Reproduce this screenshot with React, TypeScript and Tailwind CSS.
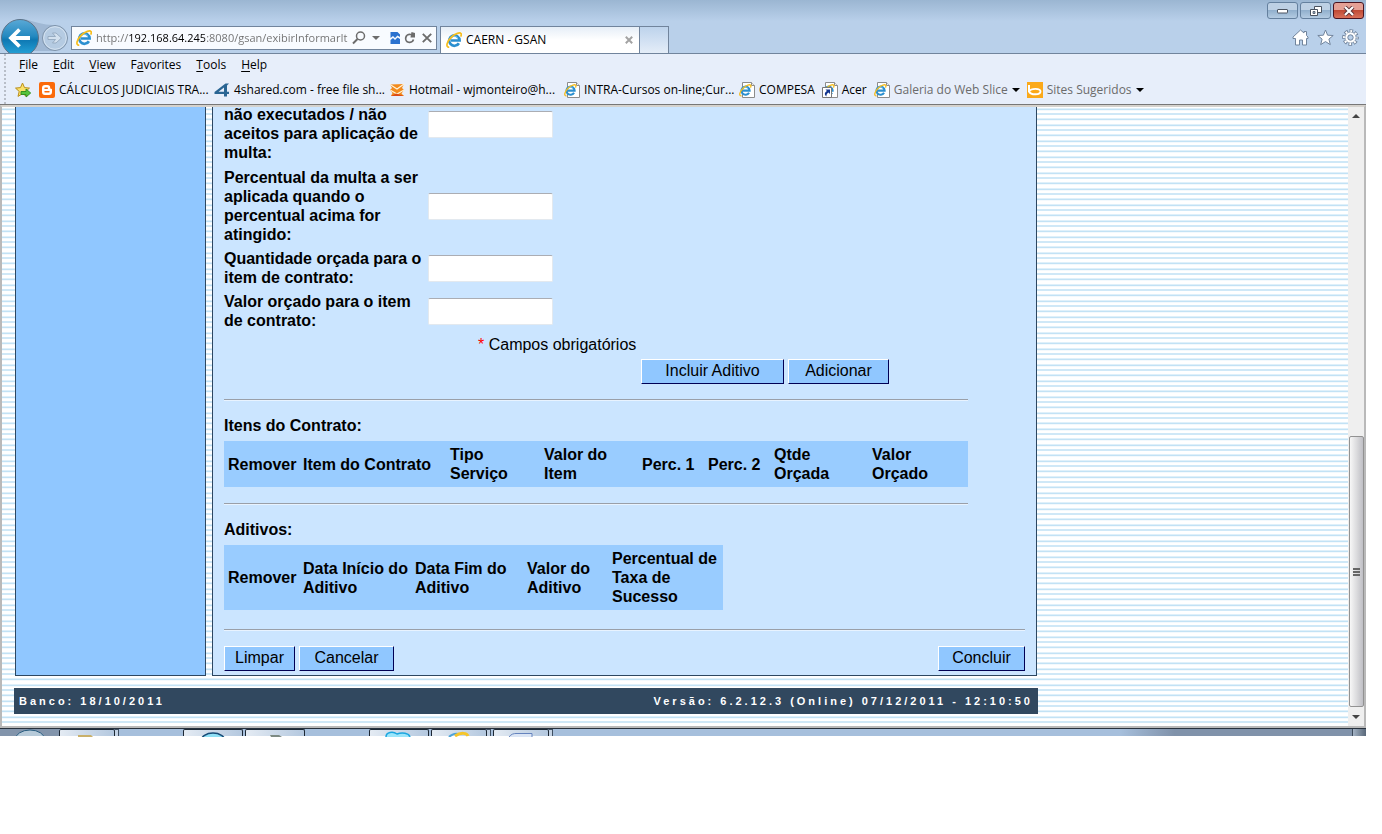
import type { ReactNode } from 'react'

const campos = [
  { id: 'percentualItens', linhas: ['não executados / não', 'aceitos para aplicação de', 'multa:'], topo: true },
  {
    id: 'percentualMulta',
    linhas: ['Percentual da multa a ser', 'aplicada quando o', 'percentual acima for', 'atingido:'],
  },
  { id: 'quantidadeOrcada', linhas: ['Quantidade orçada para o', 'item de contrato:'] },
  { id: 'valorOrcado', linhas: ['Valor orçado para o item', 'de contrato:'] },
]

const colunasItens = [
  { linhas: ['Remover'], largura: 'w-[75px]' },
  { linhas: ['Item do Contrato'], largura: 'w-[147px]' },
  { linhas: ['Tipo', 'Serviço'], largura: 'w-[94px]' },
  { linhas: ['Valor do', 'Item'], largura: 'w-[98px]' },
  { linhas: ['Perc. 1'], largura: 'w-[66px]' },
  { linhas: ['Perc. 2'], largura: 'w-[66px]' },
  { linhas: ['Qtde', 'Orçada'], largura: 'w-[98px]' },
  { linhas: ['Valor', 'Orçado'], largura: 'w-[100px]' },
]

const colunasAditivos = [
  { linhas: ['Remover'], largura: 'w-[75px]' },
  { linhas: ['Data Início do', 'Aditivo'], largura: 'w-[112px]' },
  { linhas: ['Data Fim do', 'Aditivo'], largura: 'w-[112px]' },
  { linhas: ['Valor do', 'Aditivo'], largura: 'w-[85px]' },
  { linhas: ['Percentual de', 'Taxa de', 'Sucesso'], largura: 'w-[115px]' },
]

const menus = [
  ['', 'F', 'ile'],
  ['', 'E', 'dit'],
  ['', 'V', 'iew'],
  ['F', 'a', 'vorites'],
  ['', 'T', 'ools'],
  ['', 'H', 'elp'],
]

function IeMark() {
  return (
    <>
      <path d="M12.9 11.2a5.2 5.2 0 1 1 .7-2.7H5" fill="none" stroke="#2a8fd0" strokeWidth="2.7" />
      <path d="M4.2 6.8a4.6 4.6 0 0 1 7.4-1.2" fill="none" stroke="#7fcdf2" strokeWidth="1" />
      <path d="M3.200 15.200C-.6 15.600.6 9.500 5.500 5 9.500 1.300 14 .1 15 1.600c.5.700.3 1.800-.3 3" fill="none" stroke="#f6bd1d" strokeWidth="1.700" />
    </>
  )
}

function IeIcon() {
  return (
    <svg viewBox="0 0 16 16" className="size-4 shrink-0">
      <IeMark />
    </svg>
  )
}

function PageIcon({ shortcut }: { shortcut?: boolean }) {
  return (
    <svg viewBox="0 0 16 16" className="size-4 shrink-0">
      <path d="M3.500.5h9l3 3v12h-12z" fill="#fff" stroke="#8c8c8c" />
      <path d="M12.500.5v3h3" fill="#eee" stroke="#8c8c8c" />
      <g transform="translate(0 2) scale(.78)">
        <IeMark />
      </g>
      {shortcut && (
        <>
          <path d="M.5 5.500h9v10h-9z" fill="#fff" stroke="#777" />
          <path d="M3.500 7.500H8v4.500L6.500 10.500C5 11.500 4.200 12.600 4.500 14.500 2 12.500 2.500 10.300 5 9z" fill="#12358f" />
        </>
      )}
    </svg>
  )
}

function AddFavoriteIcon() {
  return (
    <svg viewBox="0 0 16 16" className="size-4 shrink-0">
      <path d="M7.500 1l2 4.600 5 .5-3.800 3.300 1.200 5-4.400-2.700L3 14.400l1.200-5L.5 6.100l5-.5z" fill="#fbe16a" stroke="#b98f1b" />
      <path d="M6 9.500h5V7l4.700 4-4.700 4v-2.500H6z" fill="#56c43c" stroke="#2c8a1d" strokeWidth=".9" />
    </svg>
  )
}

function BloggerIcon() {
  return (
    <svg viewBox="0 0 16 16" className="size-4 shrink-0">
      <rect width="16" height="16" rx="2" fill="#fb6a0a" />
      <path d="M6 3h2.500A2.700 2.700 0 0 1 11.200 5.700c0 .8.3 1 1 1 .6 0 .8.300.8.800V10a3 3 0 0 1-3 3H6a3 3 0 0 1-3-3V6a3 3 0 0 1 3-3z" fill="#fff" />
      <path d="M6 6.200h2.300M6 9.800h4" stroke="#fb6a0a" strokeWidth="1.400" strokeLinecap="round" />
    </svg>
  )
}

function FourSharedIcon() {
  return (
    <svg viewBox="0 0 16 16" className="size-4 shrink-0">
      <path d="M15 1.500h-3.500L.5 10v2H10v2.500h3V12h2v-2.200h-2V3.500zM10 5.500v4.300H4.500z" fill="#2a6593" fillRule="evenodd" />
    </svg>
  )
}

function HotmailIcon() {
  return (
    <svg viewBox="0 0 16 16" className="size-4 shrink-0">
      <path d="M1 2.500l14-.5-2 4 2 2-2.500 3.500L15 14H2l1.500-3L1 8l2-2z" fill="#f28a1c" />
      <path d="M1 2.500L8 7l7-5" fill="none" stroke="#fff3d8" strokeWidth="1.200" />
      <path d="M1.500 8.300L8 12l7-4" fill="none" stroke="#fff3d8" strokeWidth="1.200" />
      <path d="M2 14l5-2.500 8 2.500z" fill="#db4b16" />
    </svg>
  )
}

function BingIcon() {
  return (
    <svg viewBox="0 0 16 16" className="size-4 shrink-0">
      <path d="M0 0h16v16H0z" fill="#fba919" />
      <path d="M2 3v7" stroke="#fff" strokeWidth="2" />
      <path d="M2 9.500C4 6 13.500 6 13.500 9.500S4 13.500 2 9.500z" fill="none" stroke="#fff" strokeWidth="1.900" />
    </svg>
  )
}

function Favorite({ icon, label, wide, muted, menu }: { icon: ReactNode; label: string; wide?: boolean; muted?: boolean; menu?: boolean }) {
  return (
    <a href="#" className={`flex items-center gap-1 whitespace-nowrap ${wide ? 'w-[168px]' : ''} ${muted ? 'text-[#6b6b6b]' : 'text-black'}`}>
      {icon}
      <span>{label}</span>
      {menu && (
        <svg viewBox="0 0 8 4" className="h-1 w-2">
          <path d="M0 0h8L4 4z" fill="#000" />
        </svg>
      )}
    </a>
  )
}

function WindowButton({ label, close, children }: { label: string; close?: boolean; children: ReactNode }) {
  return (
    <button
      type="button"
      aria-label={label}
      className={`flex h-[17px] w-[31px] items-center justify-center rounded-[3px] border ${
        close
          ? 'border-[#4a1420] bg-linear-to-b from-[#e5a095] from-45% via-[#c04a35] via-50% to-[#d9705a]'
          : 'border-[#64809e] bg-linear-to-b from-[#bdd0e4] from-45% via-[#92b0cd] via-50% to-[#b3cbe2]'
      }`}
    >
      {children}
    </button>
  )
}

function Botao({ children, className }: { children: ReactNode; className: string }) {
  return (
    <button
      type="button"
      className={`h-[25px] border border-t-white border-r-[#000055] border-b-[#000055] border-l-white bg-[#90c7ff] pb-0.5 text-base leading-[19px] ${className}`}
    >
      {children}
    </button>
  )
}

function Tabela({ colunas, className }: { colunas: { linhas: string[]; largura: string }[]; className: string }) {
  return (
    <table className={`table-fixed bg-[#99ccff] ${className}`}>
      <thead>
        <tr>
          {colunas.map((coluna, i) => (
            <th key={i} scope="col" className={`py-1 pl-1 text-left align-middle font-bold whitespace-nowrap ${coluna.largura}`}>
              {coluna.linhas.map((linha) => (
                <span key={linha} className="block">
                  {linha}
                </span>
              ))}
            </th>
          ))}
        </tr>
      </thead>
    </table>
  )
}

function Divisor() {
  return <hr className="h-0.5 border-t border-b border-t-[#9a9fa8] border-b-[#e8f3ff]" />
}

function BrowserHeader() {
  return (
    <header className="flex h-[54px] justify-between border-b border-[#71849c] bg-linear-to-b from-[#9bb6d2] to-[#b9d0ea] to-40%">
      <div className="flex items-end">
        <svg viewBox="0 0 71 36" className="h-9 w-[71px]" aria-hidden="true">
          <defs>
            <linearGradient id="back" x1="0" y1="0" x2="0" y2="1">
              <stop offset="0" stopColor="#5aa9d6" />
              <stop offset=".45" stopColor="#2489c0" />
              <stop offset=".55" stopColor="#0e78b3" />
              <stop offset="1" stopColor="#29a8dc" />
            </linearGradient>
          </defs>
          <path d="M20 2c12 0 16 6 36 6v26H20z" fill="#8fa9c4" opacity=".6" />
          <circle cx="20" cy="21" r="18.500" fill="url(#back)" stroke="#5d7287" />
          <path d="M30 21H12M19.500 12.500L11 21l8.500 8.500" fill="none" stroke="#fff" strokeWidth="3.800" />
          <circle cx="55" cy="21" r="12.500" fill="#b5cbe2" stroke="#7d92a9" />
          <circle cx="55" cy="21" r="11.300" fill="none" stroke="#d5e3f1" />
          <path d="M48 19.500h7.500l-3-3.500h3.500l5.500 5-5.500 5h-3.500l3-3.500H48z" fill="#d3e1ef" stroke="#93a8be" strokeWidth=".9" />
        </svg>
        <div className="mb-[3px] flex h-6 w-[366px] items-center border border-[#71849c] bg-[#f8fbff] px-1">
          <IeIcon />
          <input
            type="text"
            aria-label="Address"
            defaultValue="http://192.168.64.245:8080/gsan/exibirInformarIt"
            className="ml-1 min-w-0 flex-1 bg-[linear-gradient(to_right,#707070_32px,#000_32px,#000_109px,#707070_109px)] bg-clip-text text-[11px] text-transparent outline-none"
          />
          <div className="flex items-center gap-1">
            <button type="button" aria-label="Search">
              <svg viewBox="0 0 14 14" className="size-3.5">
                <circle cx="8.500" cy="5" r="4" fill="none" stroke="#6c6c6c" strokeWidth="1.500" />
                <path d="M5.500 8L1 12.500" stroke="#6c6c6c" strokeWidth="2" />
              </svg>
            </button>
            <button type="button" aria-label="Show addresses" className="mr-1 flex w-3 justify-center">
              <svg viewBox="0 0 8 4" className="h-1 w-2">
                <path d="M0 0h8L4 4z" fill="#6c6c6c" />
              </svg>
            </button>
            <button type="button" aria-label="Compatibility view">
              <svg viewBox="0 0 10 12" className="h-3 w-2.5">
                <path d="M.5 0h7L10 2.500V5L7.500 3.500 5 6 3 4 .5 6z" fill="#2b72cf" />
                <path d="M.5 8L3 6l2 2 2.500-2.500L10 7v5H.5z" fill="#2b72cf" />
              </svg>
            </button>
            <button type="button" aria-label="Refresh">
              <svg viewBox="0 0 12 12" className="size-3">
                <path d="M9.500 7.500A4 4 0 1 1 6.500 2.500h2" fill="none" stroke="#6c6c6c" strokeWidth="1.700" />
                <path d="M7.500 0L11 1v4.500H6.500z" fill="#6c6c6c" />
              </svg>
            </button>
            <button type="button" aria-label="Stop" className="ml-0.5">
              <svg viewBox="0 0 10 10" className="size-2.5">
                <path d="M.8.8l8.400 8.400M9.200.8L.8 9.200" stroke="#6c6c6c" strokeWidth="1.900" />
              </svg>
            </button>
          </div>
        </div>
        <div className="ml-[3px] flex h-[27px] items-center border border-b-0 border-[#71849c] bg-linear-to-b from-[#e6eef7] to-white to-50%">
          <div className="flex w-[198px] items-center gap-1 pr-1.5 pl-[5px]">
            <IeIcon />
            <span className="flex-1">CAERN - GSAN</span>
            <button type="button" aria-label="Close tab">
              <svg viewBox="0 0 8 8" className="size-2">
                <path d="M.8.8l6.400 6.400M7.200.8L.8 7.200" stroke="#a3a3a3" strokeWidth="2" />
              </svg>
            </button>
          </div>
          <button type="button" aria-label="New tab" className="h-full w-[29px] border-l border-[#71849c] bg-linear-to-b from-[#bdd3ec] to-[#e4edf8]" />
        </div>
      </div>
      <div className="flex flex-col items-end gap-2.5 pt-0.5 pr-0.5">
        <div className="flex gap-0.5">
          <WindowButton label="Minimize">
            <svg viewBox="0 0 12 6" className="h-1.5 w-3">
              <rect x=".5" y="1.500" width="10" height="3.500" rx=".5" fill="#fff" stroke="#4a5360" />
            </svg>
          </WindowButton>
          <WindowButton label="Restore">
            <svg viewBox="0 0 12 12" className="size-3">
              <path d="M4.500 1.500h7v6h-7z" fill="#fff" stroke="#4a5360" />
              <path d="M.5 4.500h7v6h-7z" fill="#fff" stroke="#4a5360" />
              <path d="M3 6.500h2v2H3z" fill="#9db8d3" stroke="#4a5360" strokeWidth=".8" />
            </svg>
          </WindowButton>
          <WindowButton label="Close" close>
            <svg viewBox="0 0 12 10" className="h-2.5 w-3">
              <path d="M2 1l8 8M10 1L2 9" stroke="#5b3136" strokeWidth="4" />
              <path d="M2 1l8 8M10 1L2 9" stroke="#fff" strokeWidth="2.200" />
            </svg>
          </WindowButton>
        </div>
        <div className="flex gap-2 pr-[5px]">
          <button type="button" aria-label="Home">
            <svg viewBox="0 0 17 17" className="size-[17px]">
              <path d="M8.500 1L12 4V2.500h2.500v4L16 8v1.500h-1.500V16h-4v-5h-3v5h-4V9.500H1V8z" fill="#fff" stroke="#71849c" />
            </svg>
          </button>
          <button type="button" aria-label="Favorites">
            <svg viewBox="0 0 17 17" className="size-[17px]">
              <path d="M8.500 1l2.100 5.200 5.600.3-4.300 3.600 1.400 5.500-4.800-3-4.800 3 1.400-5.500L.8 6.500l5.600-.3z" fill="#fff" stroke="#71849c" />
            </svg>
          </button>
          <button type="button" aria-label="Tools">
            <svg viewBox="0 0 17 17" className="size-[17px]">
              <circle cx="8.500" cy="8.500" r="6.400" fill="none" stroke="#71849c" strokeWidth="3.800" strokeDasharray="3.400 1.626" strokeDashoffset="1.700" />
              <circle cx="8.500" cy="8.500" r="5.600" fill="#fff" stroke="#71849c" strokeWidth=".8" />
              <circle cx="8.500" cy="8.500" r="6.400" fill="none" stroke="#fff" strokeWidth="2.200" strokeDasharray="1.800 3.226" strokeDashoffset=".9" />
              <circle cx="8.500" cy="8.500" r="2.700" fill="#b9d0ea" stroke="#71849c" />
            </svg>
          </button>
        </div>
      </div>
    </header>
  )
}

function Toolbars() {
  return (
    <div className="border-b border-[#777] bg-[#e7eefa] pl-1">
      <div className="border-l-2 border-dotted border-[#b8bec8]">
        <nav className="flex h-[22px] items-center gap-[15px] pl-[13px]">
          {menus.map(([before, key, after]) => (
            <button type="button" key={key + after}>
              {before}
              <span className="underline underline-offset-2">{key}</span>
              {after}
            </button>
          ))}
        </nav>
        <div className="flex h-7 items-center gap-[7px] pl-[9px]">
          <button type="button" aria-label="Add to favorites bar" className="mr-px">
            <AddFavoriteIcon />
          </button>
          <Favorite wide icon={<BloggerIcon />} label="CÁLCULOS JUDICIAIS TRA..." />
          <Favorite wide icon={<FourSharedIcon />} label="4shared.com - free file sh..." />
          <Favorite wide icon={<HotmailIcon />} label="Hotmail - wjmonteiro@h..." />
          <Favorite wide icon={<PageIcon />} label="INTRA-Cursos on-line;Cur..." />
          <Favorite icon={<PageIcon />} label="COMPESA" />
          <Favorite icon={<PageIcon shortcut />} label="Acer" />
          <Favorite muted menu icon={<PageIcon />} label="Galeria do Web Slice" />
          <Favorite muted menu icon={<BingIcon />} label="Sites Sugeridos" />
        </div>
      </div>
    </div>
  )
}

function Formulario() {
  return (
    <main className="flex-1 border border-t-0 border-[#2d4761] bg-[#cbe5ff] px-[11px] pb-1">
      <form className="-mt-0.5 flex flex-col gap-[5px]">
        {campos.map((campo) => (
          <div key={campo.id} className={`flex ${campo.topo ? 'items-start pb-px' : 'items-center'}`}>
            <label htmlFor={campo.id} className="w-[204px] font-bold whitespace-nowrap">
              {campo.linhas.map((linha) => (
                <span key={linha} className="block">
                  {linha}
                </span>
              ))}
            </label>
            <input
              id={campo.id}
              type="text"
              className={`h-[27px] w-[125px] rounded-xs border border-[#e3e9ef] border-t-[#abadb3] bg-white px-1 ${campo.topo ? 'mt-1.5' : ''}`}
            />
          </div>
        ))}
        <p className="pl-[254px]">
          <span className="text-[#ff0000]">*</span> Campos obrigatórios
        </p>
      </form>
      <div className="mt-[5px] flex gap-1 pl-[417px]">
        <Botao className="w-[143px]">Incluir Aditivo</Botao>
        <Botao className="w-[101px]">Adicionar</Botao>
      </div>
      <section className="mt-[15px] max-w-[744px]">
        <Divisor />
        <h2 className="mt-[15px] mb-1.5 font-bold">Itens do Contrato:</h2>
        <Tabela colunas={colunasItens} className="w-full" />
      </section>
      <section className="mt-4 max-w-[744px]">
        <Divisor />
        <h2 className="mt-[15px] mb-1.5 font-bold">Aditivos:</h2>
        <Tabela colunas={colunasAditivos} className="w-[499px]" />
      </section>
      <div className="mt-[19px]">
        <Divisor />
        <div className="mt-[15px] flex gap-1">
          <Botao className="w-[71px]">Limpar</Botao>
          <Botao className="w-[95px]">Cancelar</Botao>
          <Botao className="ml-auto w-[87px]">Concluir</Botao>
        </div>
      </div>
    </main>
  )
}

function ScrollBar() {
  return (
    <div className="flex w-4 flex-col items-center bg-[#efefef] text-[#333]">
      <button type="button" aria-label="Scroll up" className="flex h-[17px] items-center">
        <svg viewBox="0 0 8 4" className="h-1 w-2">
          <path d="M0 4h8L4 0z" fill="#444" />
        </svg>
      </button>
      <div className="min-h-0 flex-[314]" />
      <div className="flex min-h-0 w-[15px] flex-[270] flex-col items-center justify-center gap-px rounded-xs border border-[#929292] bg-linear-to-r from-[#f7f7f7] via-[#dcdcde] to-[#bfbfc5]">
        <span className="h-0.5 w-[7px] bg-[#666]" />
        <span className="h-0.5 w-[7px] bg-[#666]" />
        <span className="h-0.5 w-[7px] bg-[#666]" />
      </div>
      <button type="button" aria-label="Scroll down" className="flex h-[19px] items-center">
        <svg viewBox="0 0 8 4" className="h-1 w-2">
          <path d="M0 0h8L4 4z" fill="#444" />
        </svg>
      </button>
    </div>
  )
}

function TaskButton({ label, stacked, className, children }: { label: string; stacked?: boolean; className: string; children: ReactNode }) {
  return (
    <div className={`flex ${className}`}>
      <button
        type="button"
        aria-label={label}
        className="flex flex-1 justify-center rounded-t-xs border-x border-t border-[#1d2834] bg-linear-to-r from-[#e4ebf3] to-[#b4c8df]"
      >
        <svg viewBox="0 0 32 7" className="h-[7px] w-8">
          {children}
        </svg>
      </button>
      {stacked && <span className="w-1 border-t border-r border-[#3f4f61] bg-[#c3d2e4]" />}
    </div>
  )
}

function TaskBar() {
  return (
    <footer className="flex h-2 justify-between border-t border-[#27313d] bg-linear-to-r from-[#a6bfdc] from-82% to-[#8092aa] to-86%">
      <div className="flex">
        <button type="button" aria-label="Start" className="flex w-[59px] justify-center bg-[#8294ab]">
          <svg viewBox="0 0 32 7" className="h-[7px] w-8">
            <ellipse cx="16" cy="11" rx="15" ry="10" fill="#b6cad9" stroke="#285d80" />
          </svg>
        </button>
        <TaskButton label="Explorer" stacked className="w-[60px]">
          <path d="M7 5h13l2 2H7z" fill="#c9b06a" />
        </TaskButton>
        <TaskButton label="Media" className="ml-16 w-[60px]">
          <ellipse cx="16" cy="11" rx="12" ry="8" fill="#8fe0f5" stroke="#164a77" strokeWidth="1.500" />
        </TaskButton>
        <TaskButton label="Application" className="ml-0.5 w-[60px]">
          <path d="M11 5h9l3 2H12z" fill="#7d8a83" />
        </TaskButton>
        <TaskButton label="Messenger" className="ml-16 w-[60px]">
          <path d="M3 7c0-5 7-6 11-3 5-2 12-1 13 3" fill="#9be6fb" stroke="#1ba6e0" strokeWidth="1.500" />
        </TaskButton>
        <TaskButton label="Internet Explorer" stacked className="ml-0.5 w-[60px]">
          <path d="M6 7c3-3 6-4 10-3" fill="none" stroke="#4da3d8" strokeWidth="2" />
          <path d="M12 6c6-4 12-3 13 0" fill="none" stroke="#f5c52a" strokeWidth="3" />
        </TaskButton>
        <TaskButton label="Document" stacked className="ml-0.5 w-[60px]">
          <path d="M4 7c2-3 5-3.500 7-3.500h16V7" fill="#dce6f5" stroke="#6583be" />
        </TaskButton>
      </div>
      <button type="button" aria-label="Show desktop" className="w-[14px] border-l border-[#3c4a5a] bg-linear-to-r from-[#a3b2c4] to-[#596879]" />
    </footer>
  )
}

export default function App() {
  return (
    <div className="min-h-screen bg-white pr-4">
      <div className="font-['Open_Sans',sans-serif] text-xs leading-4 text-black">
        <BrowserHeader />
        <Toolbars />
        <div className="flex border-2 border-[#b9b9b9] border-t-[#d5d2cd]">
          <div className="min-w-0 flex-1 bg-[repeating-linear-gradient(#fff_0px_1px,#dff0fa_1px_2px,#c2e2f5_2px_3px,#f3f9fd_3px_4px,#fff_4px_6px,#cfe8f7_6px_8px,#fff_8px_11px,#dff0fa_11px_12px,#c2e2f5_12px_13px,#f3f9fd_13px_14px,#fff_14px_16px)] pb-3 pl-3 font-['Liberation_Sans',Arial,sans-serif] text-base leading-[19px]">
            <div className="max-w-[1024px]">
              <div className="flex gap-1.5 px-px">
                <aside className="w-[191px] border border-t-0 border-[#2d4761] bg-[#90c7ff]" />
                <Formulario />
              </div>
              <div className="mt-3 flex h-[26px] items-center justify-between bg-[#31485f] px-[5px] text-[11px] font-bold tracking-[3px] text-white">
                <span>Banco: 18/10/2011</span>
                <span>Versão: 6.2.12.3 (Online) 07/12/2011 - 12:10:50</span>
              </div>
            </div>
          </div>
          <ScrollBar />
        </div>
        <TaskBar />
      </div>
    </div>
  )
}
